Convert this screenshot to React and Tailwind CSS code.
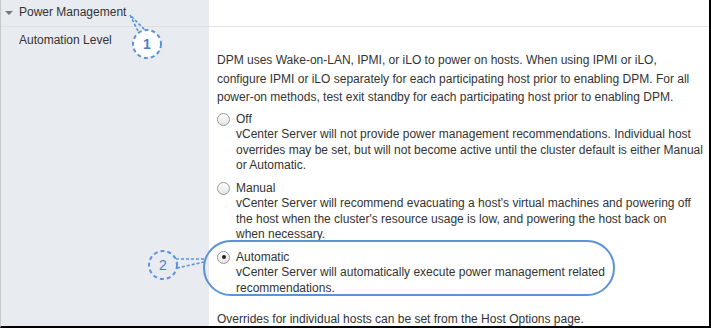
const options = [
  {
    label: "Off",
    copy: "vCenter Server will not provide power management recommendations. Individual host overrides may be set, but will not become active until the cluster default is either Manual or Automatic.",
    width: "max-w-[476px]",
  },
  {
    label: "Manual",
    copy: "vCenter Server will recommend evacuating a host's virtual machines and powering off the host when the cluster's resource usage is low, and powering the host back on when necessary.",
    width: "max-w-[462px]",
  },
  {
    label: "Automatic",
    copy: "vCenter Server will automatically execute power management related recommendations.",
    width: "max-w-[462px]",
    checked: true,
  },
];

function Radio({ checked }) {
  return (
    <span className="mt-[1px] flex h-[13px] w-[13px] shrink-0 items-center justify-center rounded-full border border-[#9a9a9a] bg-gradient-to-b from-white to-[#e4e4e4]">
      {checked && <span className="h-[4px] w-[4px] rounded-full bg-[#222]" />}
    </span>
  );
}

function Callouts() {
  const blue = "#5b92d8";
  return (
    <svg
      className="pointer-events-none absolute left-0 top-0"
      width="711"
      height="328"
      viewBox="0 0 711 328"
    >
      {/* callout 1 */}
      <path d="M137 31 L129 15 L144 30" fill="none" stroke={blue} strokeWidth="1.6" strokeDasharray="3 2" />
      <circle cx="146" cy="44" r="14" fill="white" stroke={blue} strokeWidth="2" strokeDasharray="4 3" />
      <text x="146" y="49" textAnchor="middle" fontFamily="Liberation Sans, Arial, sans-serif" fontSize="14" fontWeight="bold" fill="#4a7fc4">1</text>

      {/* callout 2 */}
      <path d="M175 259 L203 259 M176 268 L203 262" fill="none" stroke={blue} strokeWidth="1.6" strokeDasharray="3 2" />
      <circle cx="162" cy="265" r="14" fill="#e8ebf0" stroke={blue} strokeWidth="2" strokeDasharray="4 3" />
      <text x="162" y="270" textAnchor="middle" fontFamily="Liberation Sans, Arial, sans-serif" fontSize="14" fill="#4a7fc4">2</text>
    </svg>
  );
}

export default function App() {
  return (
    <div className="relative h-[328px] w-[711px] overflow-hidden border-b-2 border-l border-r-2 border-b-black border-l-[#c8c8c8] border-r-black bg-white font-['Liberation_Sans',Arial,sans-serif] text-[12px] leading-[15.5px] text-[#333]">
      <div className="grid h-full grid-cols-[208px_1fr] grid-rows-[27px_1fr]">

        {/* Left header */}
        <div className="flex items-center gap-[5px] border-b border-[#dcdfe4] bg-[#e8ebf0] pl-[4px]">
          <span className="h-0 w-0 border-x-[4px] border-t-[4px] border-x-transparent border-t-[#777]" />
          <span className="pl-[1px]">Power Management</span>
        </div>

        <div className="border-b border-[#e2e2e2]" />

        {/* Left body */}
        <div className="bg-[#e8ebf0] pl-[18px] pt-[6px]">
          Automation Level
        </div>

        {/* Right body */}
        <div className="pl-[8px] pr-[2px] pt-[24px]">
          <p className="max-w-[482px] leading-[18.5px]">
            DPM uses Wake-on-LAN, IPMI, or iLO to power on hosts. When using IPMI or iLO, configure IPMI or iLO separately for each participating host prior to enabling DPM. For all power-on methods, test exit standby for each participating host prior to enabling DPM.
          </p>

          <div className="mt-[5px] flex flex-col gap-[7px]">
            {options.map((option) => (
              <div key={option.label} className="flex gap-[6px]">
                <Radio checked={option.checked} />
                <div className={option.width}>
                  <div>{option.label}</div>
                  <div>{option.copy}</div>
                </div>
              </div>
            ))}
          </div>

          <p className="mt-[16px]">
            Overrides for individual hosts can be set from the Host Options page.
          </p>
        </div>
      </div>

      {/* highlight around Automatic */}
      <div className="pointer-events-none absolute left-[202px] top-[240px] h-[56px] w-[412px] rounded-full border-2 border-[#5b92d8]" />

      <Callouts />
    </div>
  );
}
